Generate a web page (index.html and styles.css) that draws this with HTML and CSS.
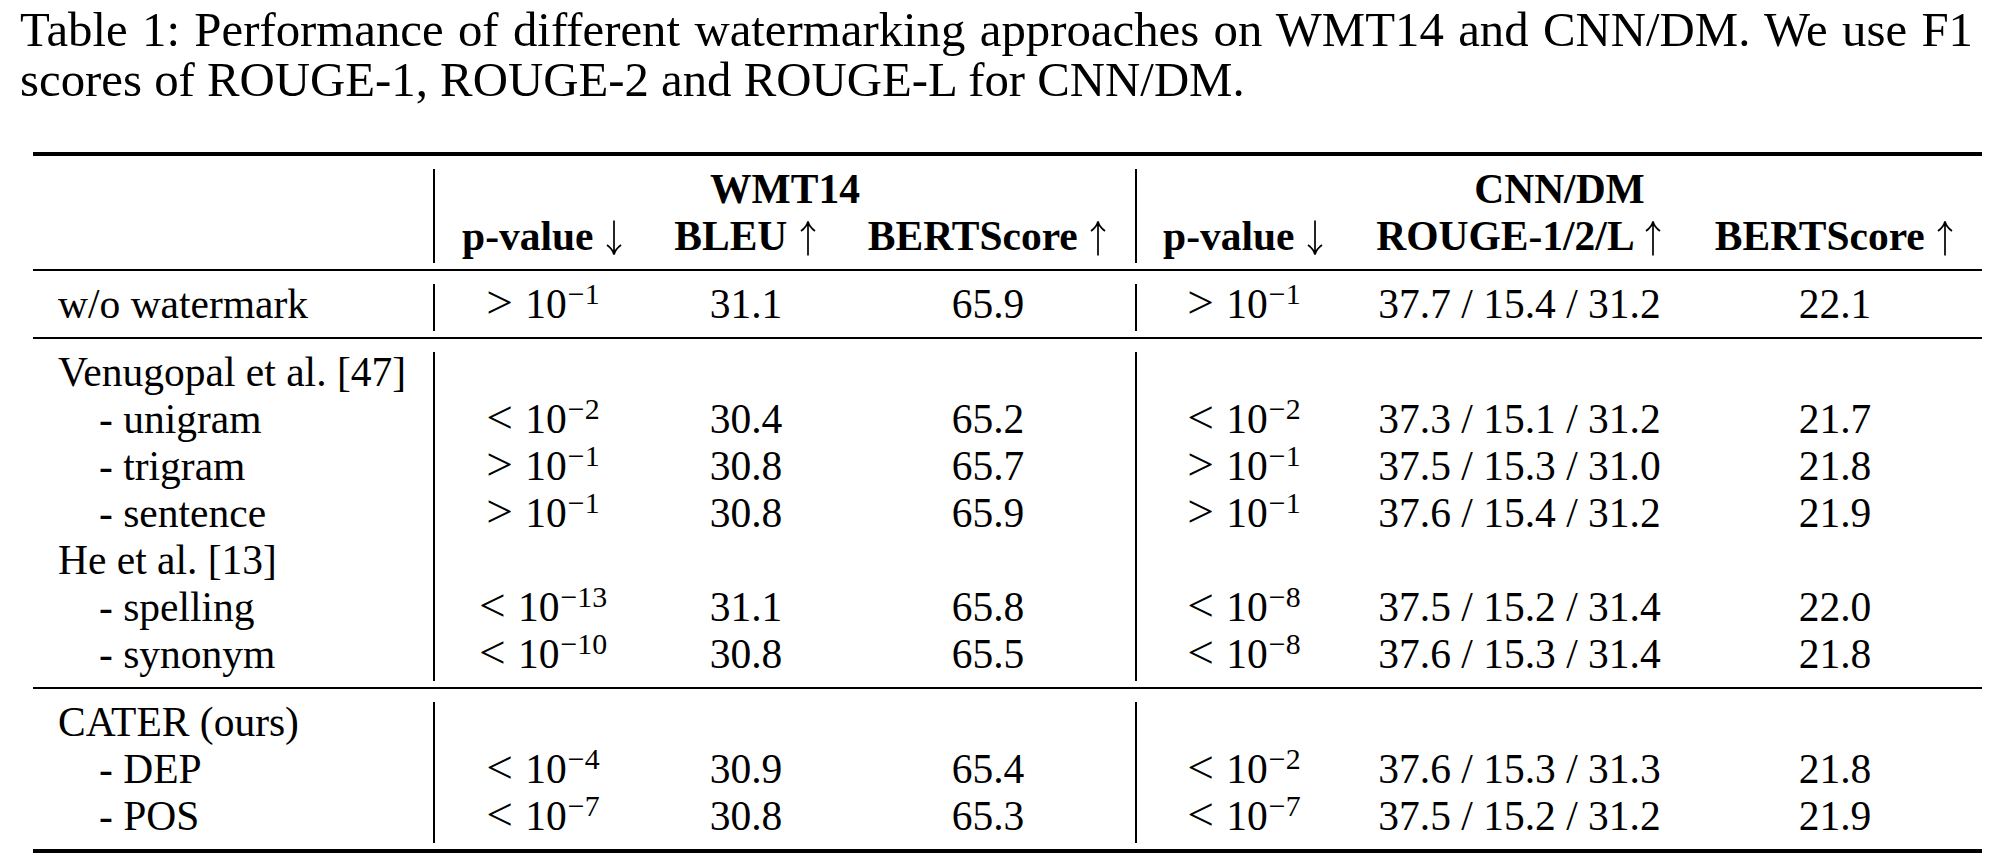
FILE: index.html
```html
<!DOCTYPE html>
<html>
<head>
<meta charset="utf-8">
<link rel="stylesheet" href="styles.css">
</head>
<body>
<p class="caption">Table 1: Performance of different watermarking approaches on WMT14 and CNN/DM. We use F1 scores of ROUGE-1, ROUGE-2 and ROUGE-L for CNN/DM.</p>
<table class="results">
  <colgroup>
    <col class="c1"><col class="c2"><col class="c3"><col class="c4"><col class="c5"><col class="c6"><col class="c7">
  </colgroup>
  <tbody>
    <tr class="rule thick"><td colspan="7"></td></tr>
    <tr class="gap below"><td colspan="7"></td></tr>
    <tr class="row head">
      <td class="label"></td>
      <td class="vl" colspan="3">WMT14</td>
      <td class="vl" colspan="3">CNN/DM</td>
    </tr>
    <tr class="row head">
      <td class="label"></td>
      <td class="vl">p-value <svg class="arr" viewBox="0 0 20 36"><path d="M10 0.5V34M3 25C6.5 27.5 9 30.5 10 34.5C11 30.5 13.5 27.5 17 25"/></svg></td>
      <td>BLEU <svg class="arr" viewBox="0 0 20 36"><path d="M10 35.5V2M3 11C6.5 8.5 9 5.5 10 1.5C11 5.5 13.5 8.5 17 11"/></svg></td>
      <td>BERTScore <svg class="arr" viewBox="0 0 20 36"><path d="M10 35.5V2M3 11C6.5 8.5 9 5.5 10 1.5C11 5.5 13.5 8.5 17 11"/></svg></td>
      <td class="vl">p-value <svg class="arr" viewBox="0 0 20 36"><path d="M10 0.5V34M3 25C6.5 27.5 9 30.5 10 34.5C11 30.5 13.5 27.5 17 25"/></svg></td>
      <td>ROUGE-1/2/L <svg class="arr" viewBox="0 0 20 36"><path d="M10 35.5V2M3 11C6.5 8.5 9 5.5 10 1.5C11 5.5 13.5 8.5 17 11"/></svg></td>
      <td>BERTScore <svg class="arr" viewBox="0 0 20 36"><path d="M10 35.5V2M3 11C6.5 8.5 9 5.5 10 1.5C11 5.5 13.5 8.5 17 11"/></svg></td>
    </tr>
    <tr class="gap above"><td colspan="7"></td></tr>
    <tr class="rule"><td colspan="7"></td></tr>
    <tr class="gap below"><td colspan="7"></td></tr>

    <tr class="row">
      <td class="label">w/o watermark</td>
      <td class="vl"><span class="rel">&gt;</span>10<span class="sup">−1</span></td>
      <td>31.1</td><td>65.9</td>
      <td class="vl"><span class="rel">&gt;</span>10<span class="sup">−1</span></td>
      <td>37.7 / 15.4 / 31.2</td><td>22.1</td>
    </tr>

    <tr class="gap above"><td colspan="7"></td></tr>
    <tr class="rule"><td colspan="7"></td></tr>
    <tr class="gap below"><td colspan="7"></td></tr>

    <tr class="row">
      <td class="label">Venugopal et al. [47]</td>
      <td class="vl"></td><td></td><td></td><td class="vl"></td><td></td><td></td>
    </tr>
    <tr class="row">
      <td class="label sub">- unigram</td>
      <td class="vl"><span class="rel">&lt;</span>10<span class="sup">−2</span></td>
      <td>30.4</td><td>65.2</td>
      <td class="vl"><span class="rel">&lt;</span>10<span class="sup">−2</span></td>
      <td>37.3 / 15.1 / 31.2</td><td>21.7</td>
    </tr>
    <tr class="row">
      <td class="label sub">- trigram</td>
      <td class="vl"><span class="rel">&gt;</span>10<span class="sup">−1</span></td>
      <td>30.8</td><td>65.7</td>
      <td class="vl"><span class="rel">&gt;</span>10<span class="sup">−1</span></td>
      <td>37.5 / 15.3 / 31.0</td><td>21.8</td>
    </tr>
    <tr class="row">
      <td class="label sub">- sentence</td>
      <td class="vl"><span class="rel">&gt;</span>10<span class="sup">−1</span></td>
      <td>30.8</td><td>65.9</td>
      <td class="vl"><span class="rel">&gt;</span>10<span class="sup">−1</span></td>
      <td>37.6 / 15.4 / 31.2</td><td>21.9</td>
    </tr>
    <tr class="row">
      <td class="label">He et al. [13]</td>
      <td class="vl"></td><td></td><td></td><td class="vl"></td><td></td><td></td>
    </tr>
    <tr class="row">
      <td class="label sub">- spelling</td>
      <td class="vl"><span class="rel">&lt;</span>10<span class="sup">−13</span></td>
      <td>31.1</td><td>65.8</td>
      <td class="vl"><span class="rel">&lt;</span>10<span class="sup">−8</span></td>
      <td>37.5 / 15.2 / 31.4</td><td>22.0</td>
    </tr>
    <tr class="row">
      <td class="label sub">- synonym</td>
      <td class="vl"><span class="rel">&lt;</span>10<span class="sup">−10</span></td>
      <td>30.8</td><td>65.5</td>
      <td class="vl"><span class="rel">&lt;</span>10<span class="sup">−8</span></td>
      <td>37.6 / 15.3 / 31.4</td><td>21.8</td>
    </tr>

    <tr class="gap above"><td colspan="7"></td></tr>
    <tr class="rule"><td colspan="7"></td></tr>
    <tr class="gap below"><td colspan="7"></td></tr>

    <tr class="row">
      <td class="label">CATER (ours)</td>
      <td class="vl"></td><td></td><td></td><td class="vl"></td><td></td><td></td>
    </tr>
    <tr class="row">
      <td class="label sub">- DEP</td>
      <td class="vl"><span class="rel">&lt;</span>10<span class="sup">−4</span></td>
      <td>30.9</td><td>65.4</td>
      <td class="vl"><span class="rel">&lt;</span>10<span class="sup">−2</span></td>
      <td>37.6 / 15.3 / 31.3</td><td>21.8</td>
    </tr>
    <tr class="row">
      <td class="label sub">- POS</td>
      <td class="vl"><span class="rel">&lt;</span>10<span class="sup">−7</span></td>
      <td>30.8</td><td>65.3</td>
      <td class="vl"><span class="rel">&lt;</span>10<span class="sup">−7</span></td>
      <td>37.5 / 15.2 / 31.2</td><td>21.9</td>
    </tr>

    <tr class="gap above"><td colspan="7"></td></tr>
    <tr class="rule thick"><td colspan="7"></td></tr>
  </tbody>
</table>
</body>
</html>
```

FILE: styles.css
```css
html, body {
  margin: 0;
  padding: 0;
  background: #ffffff;
  color: #000000;
  font-family: "Liberation Serif", "Times New Roman", serif;
}

.caption {
  width: 1953px;
  margin: 0 0 0 20px;
  padding-top: 6px;
  font-size: 48.8px;
  line-height: 49.5px;
  text-align: justify;
}

.results {
  margin: 47px 0 0 33px;
  width: 1949px;
  table-layout: fixed;
  border-collapse: separate;
  border-spacing: 0;
  font-size: 41.5px;
}

.results col.c1 { width: 400px; }
.results col.c2 { width: 218px; }
.results col.c3 { width: 190px; }
.results col.c4 { width: 294px; }
.results col.c5 { width: 216px; }
.results col.c6 { width: 337px; }
.results col.c7 { width: 294px; }

.results td {
  padding: 0;
}

.row td {
  padding: 0 6px 7px;
  line-height: 40px;
  text-align: center;
  white-space: nowrap;
  vertical-align: top;
}

.row td.label {
  text-align: left;
  padding-left: 25px;
}

.row td.sub {
  padding-left: 66px;
}

.row td.vl {
  border-left: 2px solid #000;
}

.head td {
  font-weight: 700;
}

.rule td {
  height: 2px;
  background: #000;
  font-size: 0;
  line-height: 0;
}

.rule.thick td {
  height: 4px;
}

.gap td {
  font-size: 0;
  line-height: 0;
}

.gap.below td {
  height: 13px;
}

.gap.above td {
  height: 6px;
}

.arr {
  width: 20px;
  height: 36px;
  vertical-align: -6px;
  fill: none;
  stroke: #000;
  stroke-width: 1.7;
}

.rel {
  font-size: 1.14em;
  line-height: 0;
  margin-right: 0.26em;
}

.sup {
  font-size: 0.72em;
  line-height: 0;
  vertical-align: 14px;
  margin-left: 1px;
}
```
